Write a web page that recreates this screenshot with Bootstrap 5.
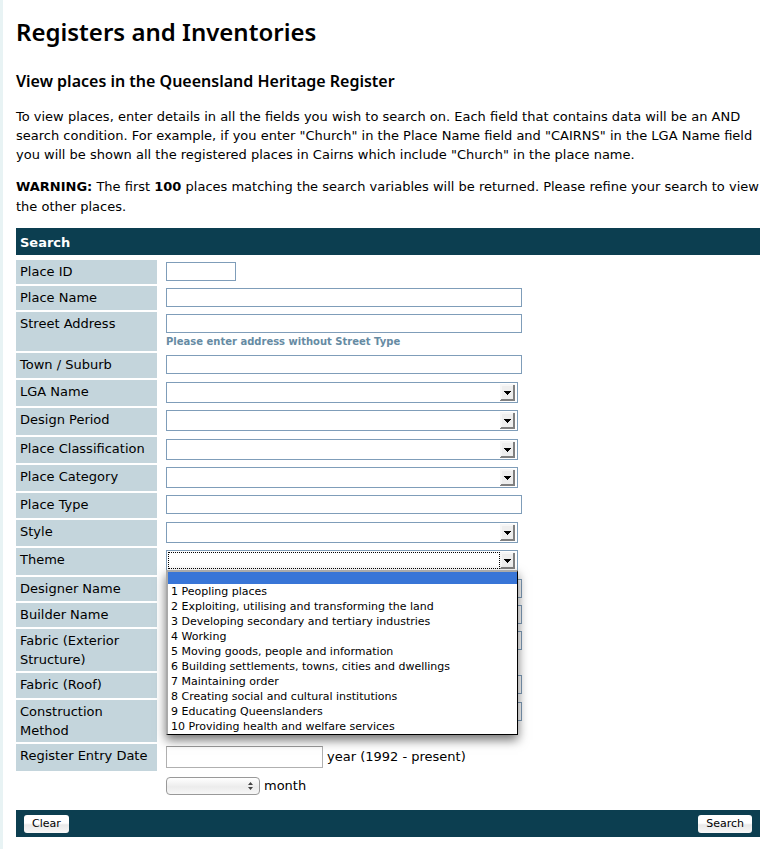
<!DOCTYPE html>
<html lang="en">
<head>
<meta charset="utf-8">
<meta name="viewport" content="width=device-width, initial-scale=1">
<title>Registers and Inventories</title>
<link href="https://cdn.jsdelivr.net/npm/bootstrap@5.3.0/dist/css/bootstrap.min.css" rel="stylesheet">
<style>
  body { font: 13px/19px Verdana, "DejaVu Sans", sans-serif; color: #000; background: #fff; }
  .page { border-left: 3px solid #e8f3f4; padding: 16px 0 12px 13px; min-height: 100vh; }
  h1, h2 { font-family: "Trebuchet MS", "Noto Sans", sans-serif; font-weight: 600; }
  h1 { font-size: 24px; line-height: 32px; margin-bottom: 23px; }
  h2 { font-size: 16px; line-height: 20px; margin-bottom: 16px; }
  .intro { margin-bottom: 13px; }
  .warning { line-height: 20px; margin-bottom: 11px; }
  .bar { background: #0c3e50; color: #fff; min-height: 27px; }
  .bar-title { padding: 5px 4px 3px; font-weight: 700; font-size: 13px; }
  .fields { margin-top: 5px; row-gap: 2px; }
  .field { column-gap: 9px; min-height: 25px; }
  .field-short { min-height: 24px; }
  .field-pick { min-height: 26px; }
  .field-tall { min-height: 27px; }
  .field-name { flex: 0 0 141px; background: #c4d5dc; padding: 2px 12px 2px 4px; }
  .field-date { padding-right: 0; }
  .field-body { padding-top: 2px; flex: 1 1 0; min-width: 0; }
  .box { display: block; width: 100%; max-width: 356px; height: 19px; border: 1px solid #7f9db9; background: #fff; padding: 0 3px; border-radius: 0; font-size: 11px; }
  .box-id { max-width: 70px; }
  .box-year { width: 157px; height: 22px; border-color: #b0b0b0; border-top-color: #999; }
  .year-note { line-height: 22px; }
  .pick { appearance: none; display: block; width: 100%; max-width: 352px; height: 21px; border: 1px solid #7f9db9; border-radius: 0; font-size: 11px; padding: 0 18px 0 4px;
    background: #fff url("data:image/svg+xml,%3Csvg xmlns='http://www.w3.org/2000/svg' width='15' height='17' shape-rendering='crispEdges'%3E%3Cpath fill='%23f6f6f6' d='M0 0h15v17H0z'/%3E%3Cpath fill='%23808080' d='M13 1h2v16H0v-1h1v-1h12z'/%3E%3Cpath fill='%23eee' d='M2 2h11v13H2z'/%3E%3Cpath d='M4 7h7v1H4zM5 8h5v1H5zM6 9h3v1H6zM7 10h1v1H7z'/%3E%3C/svg%3E") no-repeat right 2px center; }
  .pick-open { max-width: 352px; }
  .focus-dots { position: absolute; inset: 2px 18px 2px 2px; border: 1px dotted #000; pointer-events: none; }
  .hint { font-size: 10px; line-height: 14px; font-weight: 700; color: #668ba3; padding: 2px 0; }
  .options { position: absolute; top: 20px; left: 0; width: 100%; z-index: 5; background: #fff; border: 1px solid #000; border-top: 2px solid #aaa; border-left: 2px solid #aaa; box-shadow: 0 5px 10px rgba(0,0,0,.55); font-size: 11px; line-height: 15px; }
  .options li { padding: 0 3px; }
  .options .picked { background: #3875d7; height: 12px; }
  .month-row { padding: 3px 0 0 150px; gap: 4px; }
  .month { appearance: none; width: 94px; height: 18px; border: 1px solid #999; border-radius: 4px; font-size: 11px;
    background: url("data:image/svg+xml,%3Csvg xmlns='http://www.w3.org/2000/svg' width='5' height='8'%3E%3Cpath fill='%23444' d='M2.500 0 5 3H0zM0 5h5L2.500 8z'/%3E%3C/svg%3E") no-repeat right 6px center, linear-gradient(#fff, #ececec 55%, #f7f7f7); }
  .actions { margin-top: 15px; padding: 0 8px; }
  .push { height: 18px; padding: 0 8px; border: 0; border-radius: 3px; font-size: 11px; line-height: 18px; color: #000; background: linear-gradient(#fff 45%, #e9e9e9 55%, #f8f8f8); }
</style>
<script src="https://cdn.jsdelivr.net/npm/bootstrap@5.3.0/dist/js/bootstrap.bundle.min.js"></script>
</head>
<body>
<main class="page">
  <h1>Registers and Inventories</h1>
  <h2>View places in the Queensland Heritage Register</h2>
  <p class="intro">To view places, enter details in all the fields you wish to search on. Each field that contains data will be an AND search condition. For example, if you enter "Church" in the Place Name field and "CAIRNS" in the LGA Name field you will be shown all the registered places in Cairns which include "Church" in the place name.</p>
  <p class="warning"><strong>WARNING:</strong> The first <strong>100</strong> places matching the search variables will be returned. Please refine your search to view the other places.</p>
  <form>
    <div class="bar bar-title">Search</div>
    <div class="fields d-flex flex-column">
      <div class="field field-short d-flex"><label class="field-name" for="pid">Place ID</label><div class="field-body"><input class="box box-id" id="pid" type="text"></div></div>
      <div class="field field-short d-flex"><label class="field-name" for="pname">Place Name</label><div class="field-body"><input class="box" id="pname" type="text"></div></div>
      <div class="field d-flex"><label class="field-name" for="street">Street Address</label><div class="field-body"><input class="box" id="street" type="text"><div class="hint">Please enter address without Street Type</div></div></div>
      <div class="field d-flex"><label class="field-name" for="town">Town / Suburb</label><div class="field-body"><input class="box" id="town" type="text"></div></div>
      <div class="field field-pick d-flex"><label class="field-name" for="lga">LGA Name</label><div class="field-body"><select class="pick" id="lga"><option></option></select></div></div>
      <div class="field field-tall d-flex"><label class="field-name" for="period">Design Period</label><div class="field-body"><select class="pick" id="period"><option></option></select></div></div>
      <div class="field field-pick d-flex"><label class="field-name pe-0" for="class">Place Classification</label><div class="field-body"><select class="pick" id="class"><option></option></select></div></div>
      <div class="field field-pick d-flex"><label class="field-name" for="cat">Place Category</label><div class="field-body"><select class="pick" id="cat"><option></option></select></div></div>
      <div class="field d-flex"><label class="field-name" for="type">Place Type</label><div class="field-body"><input class="box" id="type" type="text"></div></div>
      <div class="field field-pick d-flex"><label class="field-name" for="style">Style</label><div class="field-body"><select class="pick" id="style"><option></option></select></div></div>
      <div class="field field-tall d-flex"><label class="field-name" for="theme">Theme</label><div class="field-body">
        <div class="pick-open position-relative">
          <select class="pick" id="theme"><option></option></select>
          <span class="focus-dots"></span>
          <ul class="options list-unstyled mb-0">
            <li class="picked"></li>
            <li>1 Peopling places</li>
            <li>2 Exploiting, utilising and transforming the land</li>
            <li>3 Developing secondary and tertiary industries</li>
            <li>4 Working</li>
            <li>5 Moving goods, people and information</li>
            <li>6 Building settlements, towns, cities and dwellings</li>
            <li>7 Maintaining order</li>
            <li>8 Creating social and cultural institutions</li>
            <li>9 Educating Queenslanders</li>
            <li>10 Providing health and welfare services</li>
          </ul>
        </div></div></div>
      <div class="field field-short d-flex"><label class="field-name" for="designer">Designer Name</label><div class="field-body"><input class="box" id="designer" type="text"></div></div>
      <div class="field field-short d-flex"><label class="field-name" for="builder">Builder Name</label><div class="field-body"><input class="box" id="builder" type="text"></div></div>
      <div class="field d-flex"><label class="field-name" for="ext">Fabric (Exterior Structure)</label><div class="field-body"><input class="box" id="ext" type="text"></div></div>
      <div class="field d-flex"><label class="field-name" for="roof">Fabric (Roof)</label><div class="field-body"><input class="box" id="roof" type="text"></div></div>
      <div class="field d-flex"><label class="field-name" for="method">Construction Method</label><div class="field-body"><input class="box" id="method" type="text"></div></div>
      <div class="field field-tall d-flex"><label class="field-name field-date" for="year">Register Entry Date</label><div class="field-body d-flex align-items-start gap-1"><input class="box box-year" id="year" type="text"><label class="year-note" for="year">year (1992 - present)</label></div></div>
      <div class="month-row d-flex align-items-center"><select class="month" id="month"><option></option></select><label for="month">month</label></div>
    </div>
    <div class="bar actions d-flex justify-content-between align-items-center">
      <button class="push" type="reset">Clear</button>
      <button class="push" type="submit">Search</button>
    </div>
  </form>
</main>
</body>
</html>
